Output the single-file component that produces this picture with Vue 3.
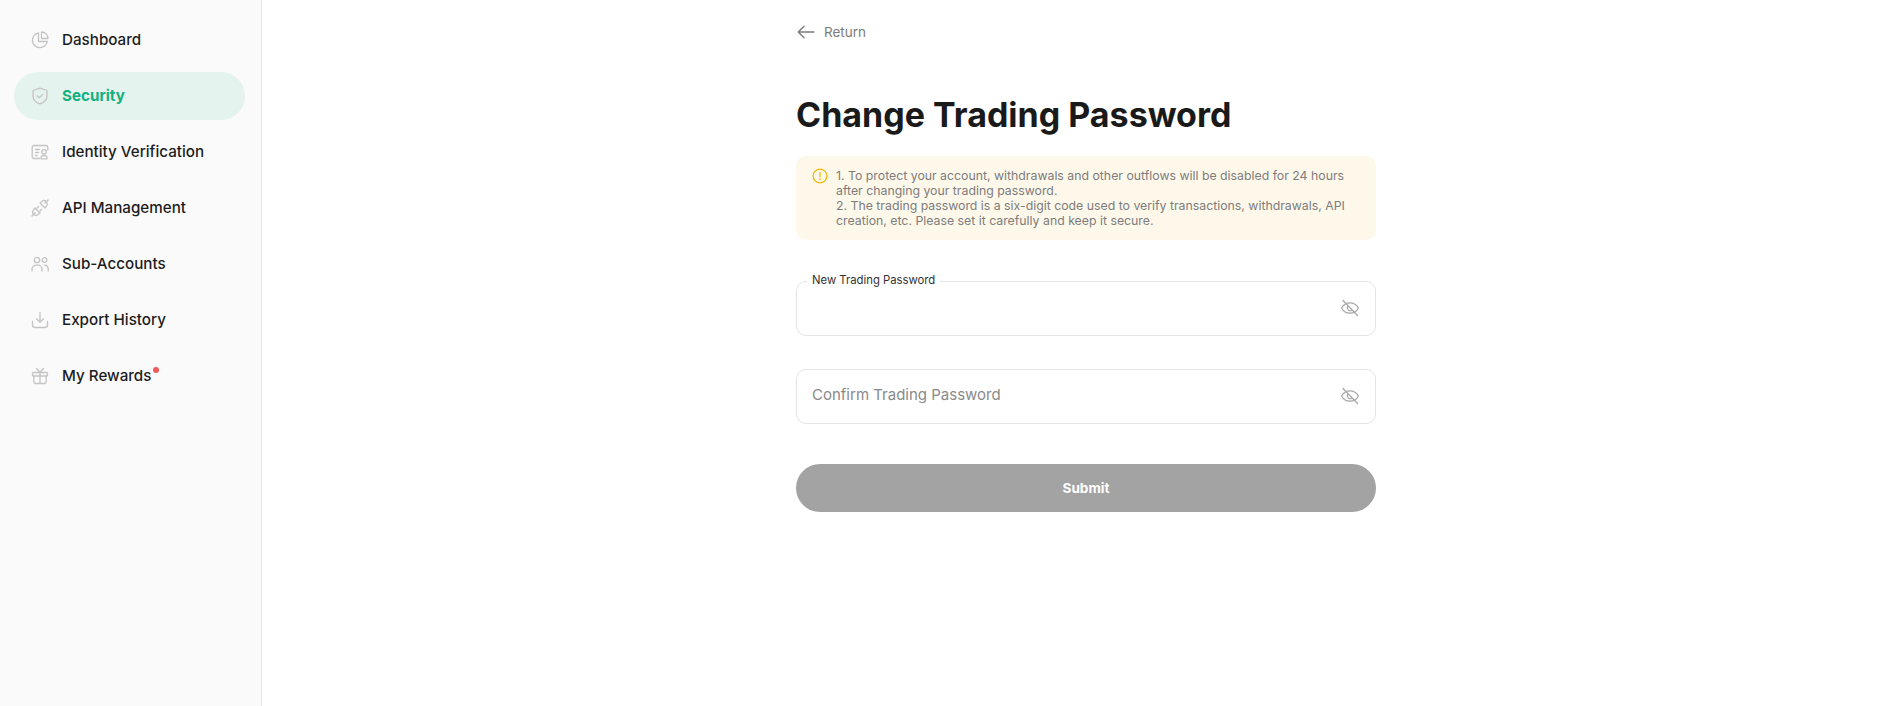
<script setup>
const navItems = [
  { label: "Dashboard", icon: "pie" },
  { label: "Security", icon: "shield", active: true },
  { label: "Identity Verification", icon: "id" },
  { label: "API Management", icon: "plug" },
  { label: "Sub-Accounts", icon: "users" },
  { label: "Export History", icon: "download" },
  { label: "My Rewards", icon: "gift", dot: true },
];

const notices = [
  "1. To protect your account, withdrawals and other outflows will be disabled for 24 hours after changing your trading password.",
  "2. The trading password is a six-digit code used to verify transactions, withdrawals, API creation, etc. Please set it carefully and keep it secure.",
];
</script>

<template>
  <div class="page">
    <aside class="sidebar">
      <nav class="nav">
        <a
          v-for="item in navItems"
          :key="item.label"
          :class="['nav-item', { active: item.active }]"
        >
          <svg class="nav-icon" viewBox="0 0 18 18" fill="none">
            <template v-if="item.icon === 'pie'">
              <path d="M7.5 1.800A7.500 7.500 0 1 0 16.300 10.500H7.500V1.800Z" />
              <path d="M10.500 1A6.500 6.500 0 0 1 17 7.500h-6.500V1Z" />
            </template>
            <template v-else-if="item.icon === 'shield'">
              <path d="M9 1.200 16 3.500v5.700c0 3.600-3 6.200-7 7.600-4-1.400-7-4-7-7.600V3.500l7-2.300Z" />
              <path d="m6.200 8.800 2 2 3.600-3.400" />
            </template>
            <template v-else-if="item.icon === 'id'">
              <path d="M8.500 15.500H3a1.800 1.800 0 0 1-1.800-1.800V4.300A1.800 1.800 0 0 1 3 2.500h12a1.800 1.800 0 0 1 1.800 1.800V7" />
              <path d="M4.500 6.500H8.500M4.500 9.500H7.500M4.500 12.500H6" />
              <circle cx="13" cy="8.800" r="2.200" />
              <path d="M10 15.800v-.8c0-1.300 1-2.300 2.300-2.300h1.400c1.300 0 2.300 1 2.300 2.300v.8h-6Z" />
            </template>
            <template v-else-if="item.icon === 'plug'">
              <path d="m1 17 3.200-3.200" />
              <path d="m17 1-3 3" />
              <path d="m4 9 5 5-1.700 1.300a3.200 3.200 0 0 1-4.600-4.600L4 9Z" />
              <path d="m14 9-5-5 1.700-1.300a3.200 3.200 0 0 1 4.600 4.600L14 9Z" />
              <path d="m6 9 1.500-1.500M9 12l1.500-1.500" />
            </template>
            <template v-else-if="item.icon === 'users'">
              <circle cx="6" cy="5" r="2.700" />
              <circle cx="13.500" cy="5" r="2.300" />
              <path d="M1 16v-1.800A4 4 0 0 1 5 10.200h2a4 4 0 0 1 4 4V16" />
              <path d="M13.500 10.200h.3a3.400 3.400 0 0 1 3.400 3.400V16" />
            </template>
            <template v-else-if="item.icon === 'download'">
              <path d="M9 1.300v9.700M5.500 7.800 9 11.200l3.500-3.400" />
              <path d="M1.500 10.500v3.500a2.500 2.500 0 0 0 2.500 2.500h10a2.500 2.500 0 0 0 2.500-2.500v-3.500" />
            </template>
            <template v-else>
              <rect x="1.500" y="5.500" width="15" height="3.500" rx="1" />
              <path d="M2.800 9v6a1.500 1.500 0 0 0 1.500 1.500h9.400a1.500 1.500 0 0 0 1.500-1.500V9M9 5.500v11" />
              <path d="M9 5.500 5.500 1.500M9 5.500l3.500-4" />
            </template>
          </svg>
          <span class="nav-label">
            {{ item.label }}
            <i v-if="item.dot" class="dot"></i>
          </span>
        </a>
      </nav>
    </aside>

    <main class="main">
      <div class="content">
        <a class="back">
          <svg class="back-icon" viewBox="0 0 18 14" fill="none">
            <path d="M17 7H1.500M7 1.300 1.300 7 7 12.700" />
          </svg>
          Return
        </a>

        <h1 class="title">Change Trading Password</h1>

        <div class="notice">
          <svg class="notice-icon" viewBox="0 0 16 16" fill="none">
            <circle cx="8" cy="8" r="6.900" />
            <path d="M8 4.500v4.200M8 10.700v.8" />
          </svg>
          <div class="notice-text">
            <p v-for="line in notices" :key="line">{{ line }}</p>
          </div>
        </div>

        <form class="form" @submit.prevent>
          <div class="field">
            <span class="legend">New Trading Password</span>
            <input class="input" type="password" />
            <svg class="eye" viewBox="0 0 20 20" fill="none">
              <path d="M1.500 10C3.500 6.500 6.300 4.800 10 4.800s6.500 1.700 8.500 5.200c-2 3.500-4.800 5.200-8.500 5.200S3.500 13.500 1.500 10Z" />
              <path d="M7.500 8.500a3 3 0 0 0 4 4" />
              <path d="M3 2.500 17.500 17.500" />
            </svg>
          </div>
          <div class="field">
            <input class="input" type="password" placeholder="Confirm Trading Password" />
            <svg class="eye" viewBox="0 0 20 20" fill="none">
              <path d="M1.500 10C3.500 6.500 6.300 4.800 10 4.800s6.500 1.700 8.500 5.200c-2 3.500-4.800 5.200-8.500 5.200S3.500 13.500 1.500 10Z" />
              <path d="M7.500 8.500a3 3 0 0 0 4 4" />
              <path d="M3 2.500 17.500 17.500" />
            </svg>
          </div>
          <button class="submit" type="submit" disabled>Submit</button>
        </form>
      </div>
    </main>
  </div>
</template>

<style>
html,
body {
  margin: 0;
  background: #fff;
}
</style>

<style scoped>
.page {
  display: flex;
  height: 706px;
  overflow: hidden;
  font-family: Inter, "Liberation Sans", sans-serif;
  color: #1a1a1a;
}
.sidebar {
  width: 261px;
  flex: none;
  background: #fafafa;
  border-right: 1px solid #e8e8e8;
}
.nav {
  display: flex;
  flex-direction: column;
  gap: 8px;
  padding: 16px 16px 0 14px;
}
.nav-item {
  display: flex;
  align-items: center;
  gap: 13px;
  height: 48px;
  padding-left: 17px;
  border-radius: 24px;
  font-size: 15.200px;
  font-weight: 500;
  line-height: 18px;
  color: #1c1c1e;
}
.nav-item.active {
  background: #e5f3ee;
  color: #13b07f;
  font-weight: 700;
}
.nav-icon {
  width: 18px;
  height: 18px;
  flex: none;
  stroke: #c4c4c4;
  stroke-width: 1.300;
  stroke-linecap: round;
  stroke-linejoin: round;
}
.nav-label {
  position: relative;
  padding-bottom: 1px;
}
.dot {
  position: absolute;
  top: 0;
  right: -8px;
  width: 6px;
  height: 6px;
  border-radius: 50%;
  background: #f05a5a;
}
.main {
  flex: 1;
  min-width: 0;
}
.content {
  width: 580px;
  margin-left: 534px;
}
.back {
  display: flex;
  align-items: center;
  gap: 9px;
  height: 20px;
  margin-top: 22px;
  padding-left: 1px;
  font-size: 13.500px;
  color: #7c7c7c;
}
.back-icon {
  width: 18px;
  height: 14px;
  stroke: #7c7c7c;
  stroke-width: 1.400;
  stroke-linecap: round;
  stroke-linejoin: round;
}
.title {
  margin: 51px 0 0;
  font-size: 34px;
  line-height: 44px;
  font-weight: 700;
  color: #1a1a1a;
}
.notice {
  display: flex;
  gap: 8px;
  margin-top: 19px;
  padding: 12px 30px 12px 16px;
  border-radius: 10px;
  background: #fef8ea;
}
.notice-icon {
  width: 16px;
  height: 16px;
  flex: none;
  stroke: #f0b90b;
  stroke-width: 1.300;
  stroke-linecap: round;
}
.notice-text {
  font-size: 12.300px;
  line-height: 15px;
  color: #7d7d7d;
}
.notice-text p {
  margin: 0;
}
.form {
  display: flex;
  flex-direction: column;
  gap: 33px;
  margin-top: 41px;
}
.field {
  position: relative;
}
.input {
  display: block;
  width: 100%;
  height: 55px;
  box-sizing: border-box;
  padding: 0 60px 4px 15px;
  border: 1px solid #e4e4e4;
  border-radius: 10px;
  background: #fff;
  outline: none;
  font: 400 15px Inter, "Liberation Sans", sans-serif;
  color: #1a1a1a;
}
.input::placeholder {
  color: #8a8a8a;
  opacity: 1;
}
.legend {
  position: absolute;
  left: 11px;
  top: -8px;
  padding: 0 5px;
  background: #fff;
  font-size: 11.300px;
  line-height: 14px;
  color: #333;
}
.eye {
  position: absolute;
  right: 16px;
  top: 17px;
  width: 20px;
  height: 20px;
  stroke: #a8a8a8;
  stroke-width: 1.300;
  stroke-linecap: round;
  stroke-linejoin: round;
}
.submit {
  height: 48px;
  margin-top: 7px;
  padding-bottom: 2px;
  border: none;
  border-radius: 24px;
  background: #a3a3a3;
  color: #fff;
  font: 700 13.600px Inter, "Liberation Sans", sans-serif;
}
</style>
